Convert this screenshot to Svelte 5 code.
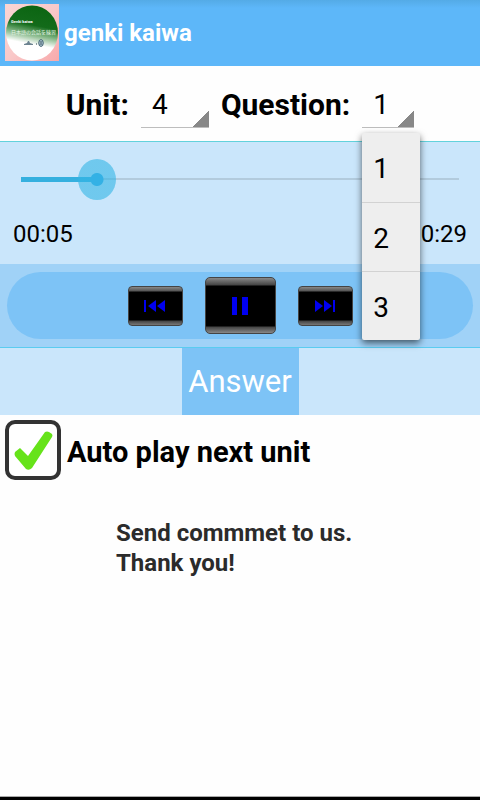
<script>
    const units = [1, 2, 3, 4, 5];
    const questions = [1, 2, 3];

    let unit = $state(4);
    let question = $state(1);
    let showQuestions = $state(true);
    let playing = $state(true);
    let autoPlay = $state(true);
    let showAnswer = $state(false);

    let position = $state(5);
    const duration = 29;
    let progress = $derived(position / duration);

    function formatTime(seconds) {
        const m = String(Math.floor(seconds / 60)).padStart(2, '0');
        const s = String(seconds % 60).padStart(2, '0');
        return `${m}:${s}`;
    }

    function pickQuestion(q) {
        question = q;
        position = 0;
        showQuestions = false;
    }

    function openQuestions(event) {
        event.preventDefault();
        showQuestions = !showQuestions;
    }

    function step(amount) {
        const next = question + amount;
        if (questions.includes(next)) {
            pickQuestion(next);
        }
    }
</script>

<div class="page">
    <header class="titleBar">
        <svg class="logo" viewBox="0 0 54 57" aria-hidden="true">
            <defs>
                <linearGradient id="logoBack" x1="0" y1="0" x2="1" y2="1">
                    <stop offset="0" stop-color="#fbd5d3" />
                    <stop offset="0.5" stop-color="#f9c9c9" />
                    <stop offset="1" stop-color="#f8a9ab" />
                </linearGradient>
                <linearGradient id="logoDisc" x1="0.6" y1="0" x2="0.42" y2="1">
                    <stop offset="0" stop-color="#0b6512" />
                    <stop offset="0.36" stop-color="#136b1a" />
                    <stop offset="0.52" stop-color="#7db380" />
                    <stop offset="0.7" stop-color="#ffffff" />
                </linearGradient>
            </defs>
            <rect width="54" height="57" fill="url(#logoBack)" />
            <ellipse cx="27" cy="29" rx="26" ry="27.5" fill="url(#logoDisc)" />
            <text x="6" y="19" class="logoName">Genki kaiwa</text>
            <text x="6" y="30" class="logoSub">日本語の会話を練習</text>
            <path d="M19 40l3-1 1-2h1l1 2 3 1v1h-9z" fill="#6c8390" />
            <ellipse cx="36" cy="39" rx="2.2" ry="3.4" fill="#c5dde8" stroke="#355566" />
            <path d="M36 37v4M31 40h1" stroke="#24404f" />
        </svg>
        <h1>genki kaiwa</h1>
    </header>

    <div class="selectRow">
        <label for="unit">Unit:</label>
        <div class="spinner unitSpinner">
            <select id="unit" bind:value={unit}>
                {#each units as u}
                    <option value={u}>{u}</option>
                {/each}
            </select>
        </div>
        <label for="question">Question:</label>
        <div class="spinner questionSpinner">
            <select id="question" bind:value={question} onmousedown={openQuestions}>
                {#each questions as q}
                    <option value={q}>{q}</option>
                {/each}
            </select>
            {#if showQuestions}
                <div class="dropdown" role="listbox" aria-label="Question">
                    {#each questions as q}
                        <button role="option" aria-selected={q === question} onclick={() => pickQuestion(q)}>{q}</button>
                    {/each}
                </div>
            {/if}
        </div>
    </div>

    <div class="seek">
        <input
            type="range"
            min="0"
            max={duration}
            aria-label="Position"
            style="--progress: {progress}"
            bind:value={position}
        />
        <div class="times">
            <span>{formatTime(position)}</span>
            <span>{formatTime(duration)}</span>
        </div>
    </div>

    <div class="controls">
        <div class="pill">
            <button class="key" aria-label="Previous" onclick={() => step(-1)}>
                <svg width="22" height="14" viewBox="0 0 22 14" fill="#0000f0">
                    <path d="M0 1h2v12H0zM12 1v12L4 7zM21 1v12l-8-6z" />
                </svg>
            </button>
            <button class="key bigKey" aria-label={playing ? 'Pause' : 'Play'} onclick={() => playing = !playing}>
                <svg width="18" height="20" viewBox="0 0 18 20" fill="#0000f0">
                    {#if playing}
                        <path d="M1 1h5v18H1zM11 1h6v18h-6z" />
                    {:else}
                        <path d="M2 1v18l15-9z" />
                    {/if}
                </svg>
            </button>
            <button class="key" aria-label="Next" onclick={() => step(1)}>
                <svg width="22" height="14" viewBox="0 0 22 14" fill="#0000f0">
                    <path d="M1 1v12l8-6zM10 1v12l8-6zM19 1h2v12h-2z" />
                </svg>
            </button>
        </div>
    </div>

    <div class="answerRow">
        <button class="answer" aria-pressed={showAnswer} onclick={() => showAnswer = !showAnswer}>Answer</button>
    </div>

    <label class="autoPlay">
        <span class="tick">
            <input type="checkbox" bind:checked={autoPlay} />
            {#if autoPlay}
                <svg viewBox="0 0 56 60" aria-hidden="true">
                    <path d="M10 32L15 28L23 36L40 12Q42 11 44 12L47 14Q48 16 47 17L27 48Q24 51 21 49L10 36Q9 34 10 32z" fill="#66e31a" />
                </svg>
            {/if}
        </span>
        <span class="autoPlayText">Auto play next unit</span>
    </label>

    <p class="comment">Send commmet to us.<br />Thank you!</p>

    <div class="bottomBar"></div>
</div>

<style>
    :global(body) {
        margin: 0;
        background-color: #fefefe;
    }
    .page {
        min-height: 100vh;
        display: flex;
        flex-direction: column;
        font-family: Roboto, "Noto Sans CJK JP", sans-serif;
        color: #000;
    }
    button, select {
        font-family: inherit;
        border: none;
        padding: 0;
        cursor: pointer;
    }
    .titleBar {
        height: 66px;
        display: flex;
        align-items: center;
        gap: 5px;
        padding: 0 5px;
        box-sizing: border-box;
        background: linear-gradient(#54abe6, #5db7f9 8px);
    }
    .logo {
        width: 54px;
        height: 57px;
        margin-bottom: 2px;
    }
    .logoName {
        font-size: 4px;
        font-weight: 700;
        fill: #fff;
    }
    .logoSub {
        font-size: 5px;
        fill: #e4f3e4;
    }
    h1 {
        margin: 0;
        font-size: 24px;
        font-weight: 700;
        color: #fff;
    }
    .selectRow {
        height: 75px;
        display: flex;
        justify-content: center;
        align-items: center;
        gap: 12px;
        font-size: 30px;
        font-weight: 700;
    }
    .selectRow label {
        padding-top: 2px;
    }
    .spinner {
        position: relative;
    }
    .unitSpinner {
        width: 68px;
    }
    .questionSpinner {
        width: 52px;
    }
    select {
        appearance: none;
        display: block;
        width: 100%;
        height: 48px;
        padding: 2px 0 0 11px;
        border-bottom: 1px solid #bdbdbd;
        border-radius: 0;
        outline: none;
        font-size: 28px;
        color: #000;
        background: linear-gradient(135deg, transparent 50%, #888 50%) right bottom / 16px 17px no-repeat;
    }
    .dropdown {
        position: absolute;
        top: 100%;
        left: 0;
        z-index: 1;
        width: 58px;
        margin-top: 5px;
        border-radius: 2px;
        background-color: #eee;
        box-shadow: 0 3px 7px rgba(0, 0, 0, 0.6);
    }
    .dropdown button {
        display: block;
        box-sizing: border-box;
        width: 100%;
        height: 69px;
        padding: 3px 0 0 11px;
        text-align: left;
        font-size: 28px;
        color: #000;
        background: none;
    }
    .dropdown button + button {
        border-top: 1px solid #d2d2d2;
    }
    .seek {
        padding: 0 2px;
        border-top: 1px solid #62d2dc;
        background-color: #cae6fb;
    }
    input[type="range"] {
        appearance: none;
        display: block;
        width: 100%;
        height: 74px;
        margin: 0;
        outline: none;
        background: none;
    }
    input[type="range"]::-webkit-slider-runnable-track {
        height: 41px;
        background:
            linear-gradient(#35b0df, #35b0df) 19px center / calc((100% - 38px) * var(--progress)) 5px no-repeat,
            linear-gradient(#b2cbdd, #b2cbdd) center / calc(100% - 38px) 2px no-repeat;
    }
    input[type="range"]::-webkit-slider-thumb {
        appearance: none;
        width: 38px;
        height: 41px;
        border-radius: 50%;
        background: radial-gradient(circle, #33b1e5 6px, rgba(51, 181, 229, 0.6) 7px);
    }
    .times {
        height: 48px;
        padding: 0 11px;
        display: flex;
        justify-content: space-between;
        font-size: 24px;
        line-height: 36px;
    }
    .controls {
        padding: 8px 7px;
        border-bottom: 1px solid #5accf0;
        background-color: #a0d2f7;
    }
    .pill {
        height: 67px;
        border-radius: 34px;
        display: flex;
        justify-content: center;
        align-items: center;
        gap: 22px;
        background-color: #7dc3f6;
    }
    .key {
        width: 55px;
        height: 40px;
        display: flex;
        justify-content: center;
        align-items: center;
        border: 1px solid #444;
        border-radius: 4px;
        background: linear-gradient(#888, #555 4px, #000 5px, #000 33px, #444 34px, #777);
    }
    .bigKey {
        width: 71px;
        height: 57px;
        border-radius: 5px;
        background: linear-gradient(#888, #444 7px, #000 8px, #000 48px, #444 49px, #888);
    }
    .answerRow {
        display: flex;
        justify-content: center;
        background-color: #cae6fb;
    }
    .answer {
        width: 117px;
        height: 67px;
        font-size: 31px;
        color: #fff;
        background-color: #7dc3f6;
    }
    .autoPlay {
        display: flex;
        align-items: center;
        gap: 6px;
        padding: 5px;
        font-size: 29px;
        font-weight: 700;
    }
    .autoPlayText {
        padding-top: 3px;
    }
    .tick {
        display: grid;
        width: 56px;
        height: 60px;
    }
    .tick input, .tick svg {
        grid-area: 1 / 1;
    }
    .tick input {
        appearance: none;
        margin: 0;
        border: 4px solid #333;
        border-radius: 10px;
        background-color: #fff;
    }
    .tick svg {
        pointer-events: none;
    }
    .comment {
        width: 248px;
        margin: 33px auto;
        font-size: 24px;
        font-weight: 700;
        line-height: 30px;
        color: #2b2b2b;
    }
    .bottomBar {
        height: 3px;
        margin-top: auto;
        border-top: 1px solid #aaa;
        background-color: #000;
    }
</style>
